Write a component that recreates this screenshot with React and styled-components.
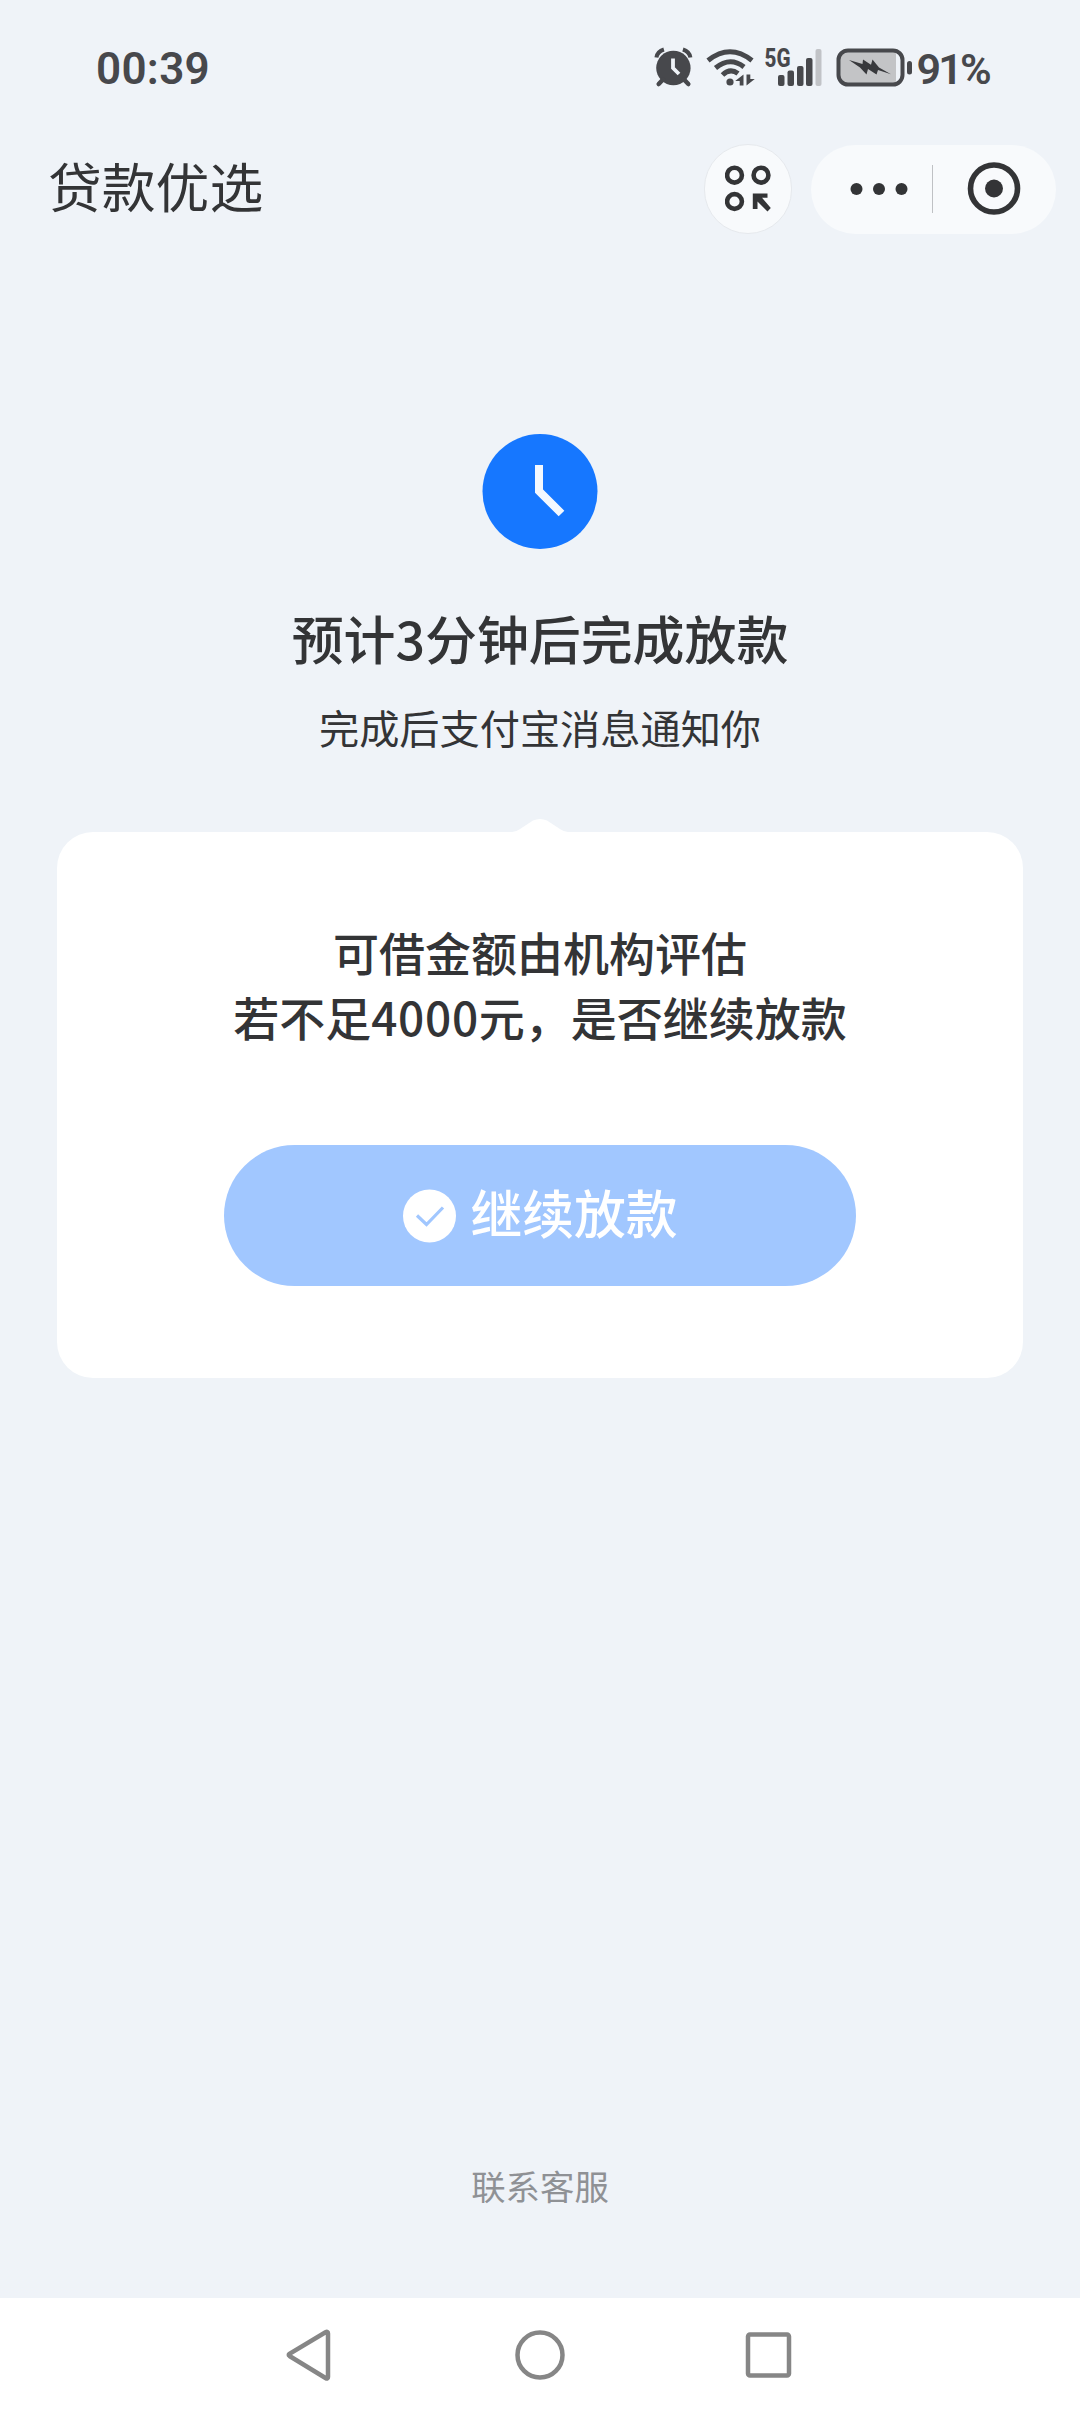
import React from "react";
import styled, { createGlobalStyle } from "styled-components";

const GlobalStyle = createGlobalStyle`
  * {
    box-sizing: border-box;
  }
  body {
    margin: 0;
    background-color: #eff3f8;
    font-family: "Noto Sans CJK SC", sans-serif;
    color: #333436;
  }
`;

const Page = styled.div`
  width: 1080px;
  height: 2412px;
  display: flex;
  flex-direction: column;
  overflow: hidden;
`;

/* status bar */
const StatusBar = styled.div`
  height: 136px;
  padding: 0 91px 0 96px;
  display: flex;
  align-items: center;
  justify-content: space-between;
  color: #47484c;
`;
const StatusText = styled.span`
  padding-top: 1px;
  font-family: Roboto, sans-serif;
  font-weight: 600;
  font-size: ${(props) => props.$size || "44px"};
  line-height: 52px;
  letter-spacing: ${(props) => props.$spacing || "0.3px"};
`;
const StatusIcons = styled.div`
  display: flex;
  align-items: center;
  svg {
    display: block;
  }
`;
const Gap = styled.span`
  width: ${(props) => props.$w};
`;

/* title bar */
const TitleBar = styled.div`
  height: 106px;
  padding: 0 24px 0 48px;
  display: flex;
  align-items: center;
`;
const Title = styled.h1`
  margin: 0 auto 0 0;
  padding-bottom: 8px;
  font-size: 53.8px;
  line-height: 80px;
  font-weight: 400;
`;
const RoundButton = styled.div`
  width: 88px;
  height: 90px;
  border: 1px solid #e6e9ed;
  border-radius: 45px;
  background-color: #f8fafc;
  display: flex;
  align-items: center;
  justify-content: center;
`;
const Capsule = styled.div`
  width: 245px;
  height: 89px;
  margin-left: 19px;
  border-radius: 45px;
  background-color: #f8fafc;
  display: flex;
  align-items: center;
`;
const CapsuleHalf = styled.div`
  flex: ${(props) => props.$size};
  padding-left: ${(props) => props.$left};
  svg {
    display: block;
  }
`;
const Divider = styled.div`
  width: 1px;
  height: 48px;
  background-color: #bfc1c4;
`;

/* result */
const Result = styled.div`
  padding-top: 191px;
  display: flex;
  flex-direction: column;
  align-items: center;
`;
const ResultTitle = styled.h2`
  margin: 50px 0 0;
  font-size: 51.9px;
  line-height: 78px;
  font-weight: 500;
`;
const ResultDesc = styled.p`
  margin: 20px 0 0;
  font-size: 40.2px;
  line-height: 60px;
`;

/* card */
const Card = styled.div`
  position: relative;
  margin: 75px 57px 0;
  height: 546px;
  padding-top: 87px;
  border-radius: 36px;
  background-color: #fff;
  display: flex;
  flex-direction: column;
  align-items: center;
`;
const Notch = styled.svg`
  position: absolute;
  top: -14px;
  left: 50%;
  transform: translateX(-50%);
`;
const CardText = styled.p`
  margin: 0;
  font-size: 46px;
  line-height: 65px;
  font-weight: 500;
  text-align: center;
`;
const CardAmount = styled.span`
  letter-spacing: 0.7px;
`;
const ContinueButton = styled.button`
  width: 632px;
  height: 141px;
  margin-top: 96px;
  padding: 0;
  border: none;
  border-radius: 71px;
  background-color: #a1c7ff;
  color: #fff;
  font-family: inherit;
  font-size: 51.8px;
  line-height: 78px;
  font-weight: 500;
  display: flex;
  align-items: center;
  justify-content: center;
  gap: 14px;
`;
const ButtonLabel = styled.span`
  padding-bottom: 8px;
`;

/* bottom */
const Service = styled.div`
  margin: auto 0 87px;
  text-align: center;
  font-size: 34.4px;
  line-height: 52px;
  color: #8f9195;
`;
const NavBar = styled.div`
  height: 114px;
  background-color: #fff;
  display: flex;
  align-items: center;
  justify-content: center;
  gap: 176px;
`;

const AlarmIcon = () => (
  <svg width="40" height="42" viewBox="654 47 40 42" fill="none" stroke="currentColor">
    <circle cx="673.4" cy="68" r="17.2" fill="currentColor" stroke="none" />
    <path d="M656.4 57.5q1-6 7.5-8M690.4 57.5q-1-6-7.5-8" strokeWidth="4" />
    <path d="M663 79.500l-4.300 4.500M684 79.500l4.300 4.500" strokeWidth="4.500" strokeLinecap="round" />
    <path d="M673 58.500V68l6 6" stroke="#eff3f8" strokeWidth="3.800" />
  </svg>
);

const WifiIcon = () => (
  <svg width="52" height="42" viewBox="705 47 52 42" fill="none" stroke="currentColor">
    <path
      d="M708 60.500Q730 43 752 60.500M715.500 68Q730 56 744 67M722.500 75Q730 67.500 738 73.500"
      strokeWidth="5"
    />
    <circle cx="730" cy="82" r="3.600" fill="currentColor" stroke="none" />
    <path
      d="M743.500 74.500v11h-3.800v-4.500h-4.500zM746.500 85.500v-11h3.800v4.500h4.500z"
      fill="currentColor"
      stroke="none"
    />
  </svg>
);

const SignalIcon = () => (
  <svg width="60" height="66" viewBox="764 35 60 66" fill="currentColor">
    <text
      x="764.500"
      y="67"
      fontFamily="Roboto, sans-serif"
      fontWeight="800"
      fontSize="25"
      textLength="26"
      lengthAdjust="spacingAndGlyphs"
    >
      5G
    </text>
    <rect x="778" y="75" width="6.500" height="11" rx="2" />
    <rect x="787.500" y="70.500" width="6.500" height="15.500" rx="2" />
    <rect x="797" y="66" width="6.500" height="20" rx="2" />
    <rect x="806" y="58" width="6.500" height="28" rx="2" />
    <rect x="815.500" y="49" width="6" height="37" rx="2" fill="#c1c3c7" />
  </svg>
);

const BatteryIcon = () => (
  <svg width="78" height="42" viewBox="836 47 78 42">
    <path d="M848 50H896V85H848Q838.500 85 838.500 75V60Q838.500 50 848 50Z" fill="#c3c4c6" />
    <rect x="838.500" y="50.500" width="64" height="34" rx="9.500" fill="none" stroke="#47484c" strokeWidth="4" />
    <rect x="907" y="61" width="5" height="13.500" rx="2.500" fill="#47484c" />
    <path
      d="M849 60L862.500 64L863 59.500L871 64.700L872.500 59.500L879 67.500L891 74.300L878 70L876.500 74.500L868 69L866.500 74.500L860 67.500Z"
      fill="#38393c"
    />
  </svg>
);

const GridIcon = () => (
  <svg width="46" height="48" viewBox="725 165.500 46 48" fill="none" stroke="#333436">
    <g strokeWidth="4.600">
      <circle cx="734.500" cy="175.700" r="7.400" />
      <circle cx="761" cy="175.700" r="7.400" />
      <circle cx="734.500" cy="202" r="7.400" />
    </g>
    <path d="M752.800 194H767.500V198.300H762L770.800 208.500L767.500 212L757.500 202V209.500H752.800Z" fill="#333436" stroke="none" />
  </svg>
);

const DoneIcon = () => (
  <svg width="54" height="54" viewBox="0 0 54 54">
    <circle cx="27.500" cy="27" r="26.500" fill="#fff" />
    <path d="M15 26.500L24.500 35.500L41 18.500" fill="none" stroke="#a1c7ff" strokeWidth="3.200" />
  </svg>
);

const App = () => {
  return (
    <Page>
      <GlobalStyle />
      <StatusBar>
        <StatusText>00:39</StatusText>
        <StatusIcons>
          <AlarmIcon />
          <Gap $w="11px" />
          <WifiIcon />
          <Gap $w="7px" />
          <SignalIcon />
          <Gap $w="12px" />
          <BatteryIcon />
          <Gap $w="3px" />
          <StatusText $size="43px" $spacing="-2.8px">91%</StatusText>
        </StatusIcons>
      </StatusBar>
      <TitleBar>
        <Title>贷款优选</Title>
        <RoundButton>
          <GridIcon />
        </RoundButton>
        <Capsule>
          <CapsuleHalf $size="0 0 121px" $left="38.5px">
            <svg width="58" height="14" viewBox="0 0 58 14" fill="#333436">
              <circle cx="6.500" cy="7" r="6" />
              <circle cx="29" cy="7" r="6" />
              <circle cx="51.500" cy="7" r="6" />
            </svg>
          </CapsuleHalf>
          <Divider />
          <CapsuleHalf $size="1" $left="34px">
            <svg width="54" height="54" viewBox="0 0 54 54">
              <circle cx="27" cy="26.500" r="23.500" fill="none" stroke="#333436" strokeWidth="5.600" />
              <circle cx="27" cy="26.500" r="9" fill="#333436" />
            </svg>
          </CapsuleHalf>
        </Capsule>
      </TitleBar>
      <Result>
        <svg width="116" height="116" viewBox="0 0 116 116">
          <circle cx="58" cy="58.500" r="57.500" fill="#1677ff" />
          <path
            d="M57 32V58L79.500 80.500"
            fill="none"
            stroke="#f3f8ff"
            strokeWidth="8"
          />
        </svg>
        <ResultTitle>预计3分钟后完成放款</ResultTitle>
        <ResultDesc>完成后支付宝消息通知你</ResultDesc>
      </Result>
      <Card>
        <Notch width="56" height="16" viewBox="0 0 56 16" fill="#fff">
          <path d="M0 16V14Q4 14 8 11L21 2.500Q28-0.500 35 2.500L48 11Q52 14 56 14V16Z" />
        </Notch>
        <CardText>
          可借金额由机构评估
          <br />
          若不足<CardAmount>4000</CardAmount>元，是否继续放款
        </CardText>
        <ContinueButton>
          <DoneIcon />
          <ButtonLabel>继续放款</ButtonLabel>
        </ContinueButton>
      </Card>
      <Service>联系客服</Service>
      {/* 系统导航键 */}
      <NavBar>
        <svg width="52" height="54" viewBox="0 0 52 54" fill="none" stroke="#868686" strokeWidth="4.500">
          <path d="M4.500 28Q3 27 4.500 25.800L40.500 4.300Q43 3 43 5.500V49Q43 51.500 40.500 50Z" />
        </svg>
        <svg width="54" height="54" viewBox="0 0 54 54" fill="none" stroke="#868686" strokeWidth="4.500">
          <circle cx="27" cy="27" r="22.500" />
        </svg>
        <svg width="52" height="54" viewBox="0 0 52 54" fill="none" stroke="#868686" strokeWidth="4.500">
          <rect x="5" y="6.500" width="41" height="41" rx="2" />
        </svg>
      </NavBar>
    </Page>
  );
};

export default App;
